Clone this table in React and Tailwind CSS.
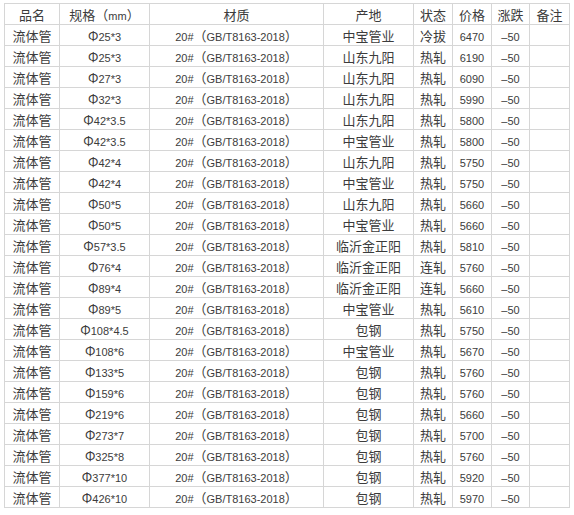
import React from 'react';

const rows = [
  ['Φ25*3', '中宝管业', '冷拔', '6470'],
  ['Φ25*3', '山东九阳', '热轧', '6190'],
  ['Φ27*3', '山东九阳', '热轧', '6090'],
  ['Φ32*3', '山东九阳', '热轧', '5990'],
  ['Φ42*3.5', '山东九阳', '热轧', '5800'],
  ['Φ42*3.5', '中宝管业', '热轧', '5800'],
  ['Φ42*4', '山东九阳', '热轧', '5750'],
  ['Φ42*4', '中宝管业', '热轧', '5750'],
  ['Φ50*5', '山东九阳', '热轧', '5660'],
  ['Φ50*5', '中宝管业', '热轧', '5660'],
  ['Φ57*3.5', '临沂金正阳', '热轧', '5810'],
  ['Φ76*4', '临沂金正阳', '连轧', '5760'],
  ['Φ89*4', '临沂金正阳', '连轧', '5660'],
  ['Φ89*5', '中宝管业', '热轧', '5610'],
  ['Φ108*4.5', '包钢', '热轧', '5750'],
  ['Φ108*6', '中宝管业', '热轧', '5670'],
  ['Φ133*5', '包钢', '热轧', '5760'],
  ['Φ159*6', '包钢', '热轧', '5760'],
  ['Φ219*6', '包钢', '热轧', '5660'],
  ['Φ273*7', '包钢', '热轧', '5700'],
  ['Φ325*8', '包钢', '热轧', '5760'],
  ['Φ377*10', '包钢', '热轧', '5920'],
  ['Φ426*10', '包钢', '热轧', '5970'],
];

// split CJK / full-width runs from ascii so each gets its own size
const Mix = ({ text }) => {
  const parts = text.split(/([\u3000-\u9fff\uff00-\uffefΦ]+)/).filter(Boolean);
  return parts.map((p, i) =>
    /[\u3000-\u9fff\uff00-\uffefΦ]/.test(p) ? (
      <span key={i} className="text-[13px] font-['Noto_Sans_CJK_SC',sans-serif]">
        {p}
      </span>
    ) : (
      <span key={i} className="text-[11px] font-['Liberation_Sans',sans-serif]">
        {p}
      </span>
    )
  );
};

const cell = 'border border-[#d6d6d6] h-[21px] p-0 text-center align-middle leading-none';

const App = () => {
  const head = ['品名', '规格（mm）', '材质', '产地', '状态', '价格', '涨跌', '备注'];
  return (
    <div className="bg-white w-[574px] h-[515px] pl-[4px] pt-[3px] text-[#3c3c3c]">
      <table className="table-fixed border-collapse w-[565px]">
        <colgroup>
          <col className="w-[55px]" />
          <col className="w-[90px]" />
          <col className="w-[174px]" />
          <col className="w-[90px]" />
          <col className="w-[39px]" />
          <col className="w-[39px]" />
          <col className="w-[38px]" />
          <col className="w-[40px]" />
        </colgroup>
        <thead>
          <tr>
            {head.map((h) => (
              <th key={h} className={cell + ' font-normal'}>
                <Mix text={h} />
              </th>
            ))}
          </tr>
        </thead>
        <tbody>
          {rows.map((r, i) => (
            <tr key={i}>
              <td className={cell}><Mix text="流体管" /></td>
              <td className={cell}><Mix text={r[0]} /></td>
              <td className={cell}><Mix text="20#（GB/T8163-2018）" /></td>
              <td className={cell}><Mix text={r[1]} /></td>
              <td className={cell}><Mix text={r[2]} /></td>
              <td className={cell}><Mix text={r[3]} /></td>
              <td className={cell}><Mix text="–50" /></td>
              <td className={cell}></td>
            </tr>
          ))}
        </tbody>
      </table>
    </div>
  );
};

export default App;
